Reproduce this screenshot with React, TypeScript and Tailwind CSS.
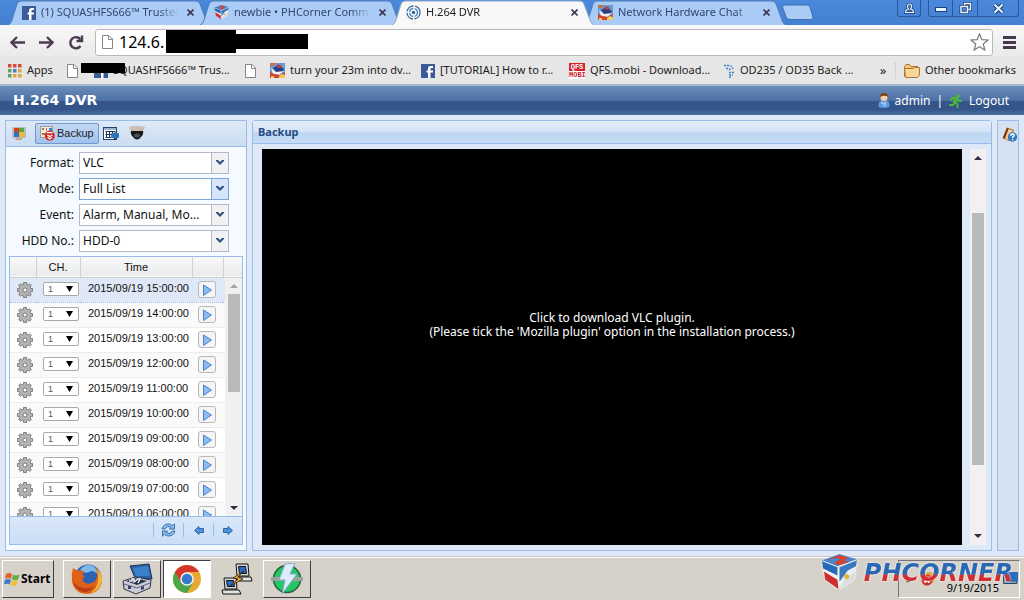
import { useState } from 'react';
import type { ReactNode } from 'react';

const FacebookIcon = () => (
  <svg className="w-[14px] h-[14px] shrink-0" viewBox="0 0 14 14">
    <rect width="14" height="14" fill="#3a5a98" />
    <path d="M12 4H10.500Q9.500 4 9.500 5V6.500H12V8.500H9.500V14H7V8.500H5.500V6.500H7V4.500Q7 2 9.500 2H12Z" fill="#fff" />
  </svg>
);

const CubeIcon = ({ className }: { className: string }) => (
  <svg className={className} viewBox="0 0 36 36">
    <path d="M1 6L18 0L35 5L16 12Z" fill="#4a86c8" />
    <path d="M6 6L18 1L27 4L22 6L27 8L16 11L13 8L20 5L14 4Z" fill="#d8402f" />
    <path d="M1 7L16 13L17 34L4 25Z" fill="#f4f4f4" />
    <path d="M1 7L16 13L16 21L2 14Z" fill="#2868b8" />
    <path d="M3 17L16 25L17 34L4 25Z" fill="#cf2e2e" />
    <path d="M18 13L35 6L32 25L18 34Z" fill="#e9eef2" />
    <path d="M18 13L35 6L34 12L26 16L18 27Z" fill="#3a78c0" />
    <path d="M33 17L32 25L18 34L22 26Z" fill="#d9dee2" />
    <circle cx="25" cy="22" r="2.500" fill="#e8b13a" />
  </svg>
);

const DvrIcon = () => (
  <svg className="w-[15px] h-[15px] shrink-0" viewBox="0 0 15 15" fill="none">
    <circle cx="7.500" cy="7.500" r="6.500" stroke="#3d6590" strokeWidth="1.300" strokeDasharray="9 1.500" />
    <circle cx="7.500" cy="7.500" r="4" stroke="#4a90d0" strokeWidth="1.400" strokeDasharray="5 1.500" />
    <circle cx="7.500" cy="7.500" r="1.700" fill="#2f5f96" />
  </svg>
);

const HardwareIcon = () => (
  <svg className="w-[15px] h-[15px] shrink-0" viewBox="0 0 15 15">
    <rect width="15" height="15" fill="#6a9ad0" />
    <path d="M0 0H6L3 3L0 3Z" fill="#c9713a" />
    <path d="M3 5L8 2L14 6L12 10L7 10Z" fill="#2a3f80" />
    <path d="M1 5L6 9L14 8L9 12L3 11Z" fill="#f3efe8" />
    <path d="M0 9L4 11L10 12L15 9V15H0Z" fill="#d2452c" />
    <path d="M9 13L12 11L15 12V15H9ZM1 13H4V15H1Z" fill="#f4c860" />
    <path d="M8 1L12 3L10 5L6 4Z" fill="#b83c48" />
  </svg>
);

const PageIcon = () => (
  <svg className="w-[11px] h-[14px] shrink-0" viewBox="0 0 11 14">
    <path d="M0.500 0.500H7L10.500 4V13.500H0.500Z" fill="#fff" stroke="#858585" />
    <path d="M6.500 0.500V4.500H10.500" fill="none" stroke="#858585" />
  </svg>
);

const AppsIcon = () => (
  <svg className="w-[14px] h-[14px] shrink-0" viewBox="0 0 14 14">
    <path d="M0 0H3.500V3.500H0ZM5 0H8.500V3.500H5ZM10 0H13.500V3.500H10Z" fill="#d24a42" />
    <path d="M0 5H3.500V8.500H0ZM0 10H3.500V13.500H0Z" fill="#62a45a" />
    <path d="M5 5H8.500V8.500H5Z" fill="#4682c4" />
    <path d="M5 10H8.500V13.500H5ZM10 5H13.500V8.500H10ZM10 10H13.500V13.500H10Z" fill="#dfa540" />
  </svg>
);

const QfsIcon = () => (
  <span className="flex flex-col w-4 h-4 shrink-0 font-['Liberation_Mono'] font-bold text-[7px] leading-[8px] text-center">
    <span className="bg-[#d3242c] text-white">QFS</span>
    <span className="bg-white text-[#d3242c]">MOBI</span>
  </span>
);

const ForumIcon = () => (
  <svg className="w-[11px] h-[14px] shrink-0" viewBox="0 0 11 14" fill="none" stroke="#3e7fc6" strokeWidth="1.400" strokeDasharray="2 1">
    <path d="M0 1.500H4Q8 1.500 9 5M2 4.500Q6 4 7 7M5 8.500H10M5 11H9M5 13H7" />
  </svg>
);

const FolderIcon = () => (
  <svg className="w-[16px] h-[14px] shrink-0" viewBox="0 0 16 14">
    <path d="M0.500 12.500V2.500L2 0.500H5.500L7 2.500H13.500V4" fill="#f3c67c" stroke="#b4702c" />
    <path d="M0.500 4.500H9L10.500 3.500H15.500V11L13.500 13.500H1.500Z" fill="#f8d898" stroke="#b4722f" />
  </svg>
);

const MonitorIcon = () => (
  <svg className="w-[14px] h-[14px]" viewBox="0 0 14 14">
    <rect width="14" height="11" rx="1" fill="#b6bcc0" />
    <path d="M2 1H7V5H2Z" fill="#db3d20" />
    <path d="M7 1H12V5H7Z" fill="#56a83a" />
    <path d="M2 5H7V10H2Z" fill="#2d6fc8" />
    <path d="M7 5H12V10H7Z" fill="#edba2e" />
    <path d="M4 11H10V13H3Z" fill="#c8a884" />
  </svg>
);

const BackupIcon = () => (
  <svg className="w-[15px] h-[15px]" viewBox="0 0 15 15">
    <rect x="0.500" y="0.500" width="12" height="11" fill="#f2ece4" stroke="#9e9a94" />
    <path d="M2 2H4V4H2ZM2 7H5V9H2ZM6 2H7V5H6Z" fill="#a97245" />
    <path d="M9 2H12V5H9Z" fill="#3f83c9" />
    <circle cx="9.800" cy="9.800" r="5" fill="#cf2724" />
    <path d="M7 6.700H12.600M7.300 9L9.800 10.500L12.300 9M7.500 11.300L9.800 13L12.100 11.300" stroke="#fff" strokeWidth="1.200" fill="none" />
  </svg>
);

const RecordIcon = () => (
  <svg className="w-4 h-[15px]" viewBox="0 0 16 15">
    <rect x="0.500" y="1.500" width="13" height="12" fill="#fff" stroke="#22466e" />
    <path d="M1 2H13V4H1Z" fill="#9db6cf" />
    <path d="M2.500 5.500H12M2.500 8.500H8M2.500 11.500H8M3.500 5V12M6.500 5V12M9.500 5V8M12 5V7" stroke="#1c3050" fill="none" />
    <rect x="8" y="7" width="8" height="5" rx="1" fill="#2f72c0" />
    <path d="M11 12H13L14 14H10Z" fill="#243f66" />
  </svg>
);

const DomeIcon = () => (
  <svg className="w-4 h-[15px]" viewBox="0 0 16 15">
    <path d="M0 1Q8 -1 16 1L14 6H2Z" fill="#c9beb0" />
    <path d="M2 5H14Q15 8 12 11Q8 16 4 11Q1 8 2 5Z" fill="#16181c" />
    <ellipse cx="8" cy="9.500" rx="3" ry="2" fill="#4a5058" />
  </svg>
);

const GearIcon = () => (
  <svg className="w-4 h-4" viewBox="0 0 16 16">
    <path d="M6.500 0.500H9.500V2.500L11 3.100L12.500 1.700L14.400 3.600L13 5L13.600 6.500H15.500V9.500H13.600L13 11L14.400 12.400L12.500 14.300L11 12.900L9.500 13.500V15.500H6.500V13.500L5 12.900L3.500 14.300L1.600 12.400L3 11L2.400 9.500H0.500V6.500H2.400L3 5L1.600 3.600L3.500 1.700L5 3.100L6.500 2.500Z" fill="#b3b3b3" stroke="#777" strokeWidth="0.900" />
    <circle cx="8" cy="8" r="2" fill="#fff" stroke="#777" />
  </svg>
);

const UserIcon = () => (
  <svg className="w-3 h-[15px]" viewBox="0 0 12 15">
    <path d="M0.500 12Q0.500 7 6 7Q11.500 7 11.500 12V14Q6 16 0.500 14Z" fill="#5b9ae0" />
    <path d="M4 11V9M8 10Q5.500 9.500 5.500 11.500Q6 13 8 12" stroke="#e6f2ff" fill="none" />
    <circle cx="6" cy="4.500" r="3.500" fill="#f2cfa8" />
    <path d="M2 4Q2 0 6 0Q10.500 0 10 4Q8 2 4.500 3Z" fill="#7e4218" />
  </svg>
);

const RunnerIcon = () => (
  <svg className="w-[13px] h-[14px]" viewBox="0 0 13 14" fill="none" stroke="#4cb83c" strokeLinecap="square">
    <circle cx="9" cy="2" r="1.300" fill="#4cb83c" strokeWidth="1" />
    <path d="M7.500 4.500L5.500 8" strokeWidth="3" />
    <path d="M7 4H3L2 6M8 5L9.500 7H12M6 8L8.500 10V13M5.500 9L4 11H1" strokeWidth="1.800" />
  </svg>
);

const HelpBookIcon = () => (
  <svg className="w-4 h-[15px]" viewBox="0 0 16 15">
    <path d="M5 0.500L12 3L7 14L0.500 11Z" fill="#9d5a2b" />
    <path d="M6.500 2L11 3.500L6 13L3 11.500Z" fill="#f5cf95" />
    <path d="M5 1L6.500 1.500L2.500 12L1 11Z" fill="#7b3413" />
    <circle cx="10.500" cy="10" r="4.700" fill="#3478c6" />
    <path d="M8.800 9Q8.800 7 10.600 7Q12.400 7.200 12.200 8.700Q12 9.500 10.600 10.200V11M10.600 12V13.200" stroke="#fff" strokeWidth="1.300" fill="none" />
  </svg>
);

const SyncIcon = () => (
  <svg className="w-[15px] h-[14px]" viewBox="0 0 15 14">
    <path d="M1 6Q2.500 1 7.500 1Q10 1 11.500 2.800L13.500 0.800V6H8.500L10 4.400Q6 2 3.800 6Z" fill="#8dbcf0" stroke="#2d62a4" strokeWidth="0.900" />
    <path d="M14 8Q12.500 13 7.500 13Q5 13 3.500 11.200L1.500 13.200V8H6.500L5 9.600Q9 12 11.200 8Z" fill="#8dbcf0" stroke="#2d62a4" strokeWidth="0.900" />
  </svg>
);

const PageArrow = ({ d }: { d: string }) => (
  <svg className="w-[10px] h-[9px]" viewBox="0 0 10 9">
    <path d={d} fill="#4c92dc" stroke="#2a5c9e" strokeWidth="0.900" />
  </svg>
);

const StartIcon = () => (
  <svg className="w-4 h-[15px] shrink-0" viewBox="0 0 16 15">
    <path d="M2 2Q5 0 8 2L7 7Q4 5 1 7Z" fill="#e5622c" />
    <path d="M9 2.500Q12 4.500 15.500 2.500L14 7.500Q11 9 8 7.500Z" fill="#63ac3d" />
    <path d="M1 8Q4 6 7 8L5.500 12.500Q3 11 0 12.500Z" fill="#3b78cc" />
    <path d="M7.700 8.500Q10.500 10 13.700 8.500L12.500 13Q9.500 15 6.500 13Z" fill="#f1bd38" />
  </svg>
);

const FirefoxIcon = () => (
  <svg className="w-8 h-8" viewBox="0 0 32 32">
    <circle cx="17" cy="15" r="13.500" fill="#2e62b4" />
    <path d="M9 7Q14 0 22 3Q28 7 27 12Q22 6 18 9Q14 11 11 8Z" fill="#7fb8ea" />
    <path d="M2 5L7 8Q10 6 13 9L11 12L14 13Q11 15 12 18Q16 23 23 19Q27 16 26 9L24 5Q32 10 31 18Q29 30 17 31Q3 31 1 18Q0 11 2 5Z" fill="#df6118" />
    <path d="M25 5Q32 11 31 18Q28 28 20 30Q27 24 27 16Q28 10 25 5Z" fill="#f3b437" />
    <path d="M1 17Q5 24 13 25Q19 26 23 23Q20 29 13 29Q5 28 1 17Z" fill="#b63e11" />
  </svg>
);

const ToolboxIcon = () => (
  <svg className="w-8 h-8" viewBox="0 0 32 32">
    <path d="M9 3L28 1L31 16L14 15Z" fill="#2a62a8" stroke="#23304c" />
    <path d="M12 5L27 3L29 13L15 13Z" fill="#3c80cc" />
    <path d="M2 18L14 14L30 17L29 25L15 31L3 26Z" fill="#c9ccd6" stroke="#33364a" />
    <path d="M5 18L14 15L26 18L16 22Z" fill="#26344e" />
    <path d="M8 18H11V16H13V19L17 16H19L17 20" stroke="#e6e9f0" strokeWidth="1.500" fill="none" />
    <path d="M3 21L16 25L29 20" stroke="#60637a" fill="none" />
    <path d="M7 23H10V26H7ZM20 24L23 23V26L20 27Z" fill="#4a3868" />
  </svg>
);

const ChromeIcon = () => (
  <svg className="w-[30px] h-[30px]" viewBox="0 0 30 30">
    <circle cx="15" cy="15" r="14" fill="#e8a934" />
    <path d="M2.900 8A14 14 0 0 1 27.100 8H15L9 18.500Z" fill="#d8352c" />
    <path d="M2.900 8A14 14 0 0 0 15 29L21 18.500H9Z" fill="#4aa648" />
    <circle cx="15" cy="15" r="6.800" fill="#f5f5f5" />
    <circle cx="15" cy="15" r="5.300" fill="#3679c8" />
  </svg>
);

const PuttyIcon = () => (
  <svg className="w-8 h-8" viewBox="0 0 32 32" stroke="#111">
    <path d="M15 1H27L28 13H16Z" fill="#d9d9d6" />
    <path d="M17.500 3.500H24.500L25.500 10.500H18.500Z" fill="#2e6ac0" />
    <path d="M14 14H30L31 18H17Z" fill="#e4e4e0" />
    <path d="M3 15H15L16 26H4Z" fill="#d9d9d6" />
    <path d="M5.500 17.500H12.500L13.500 23.500H6.500Z" fill="#2e6ac0" />
    <path d="M1 27H18L20 31H2Z" fill="#e4e4e0" />
    <path d="M23 8L12 15L17 16L9 23L22 16L17 14Z" fill="#f2a72c" strokeWidth="0.700" />
  </svg>
);

const BoltIcon = () => (
  <svg className="w-8 h-8" viewBox="0 0 32 32">
    <circle cx="16" cy="16" r="13.500" fill="#22c864" stroke="#285b3c" strokeWidth="1.500" />
    <path d="M0 14H32V18H0Z" fill="#9aa49e" />
    <path d="M14 1L24 0L19 11H26L11 31L14 17H8Z" fill="#dcebfa" stroke="#86a8cc" />
  </svg>
);

const TABS = [
  { title: '(1) SQUASHFS666™ Trusted Seller', icon: <FacebookIcon /> },
  { title: 'newbie • PHCorner Community', icon: <CubeIcon className="w-[15px] h-[15px] shrink-0" /> },
  { title: 'H.264 DVR', icon: <DvrIcon />, active: true },
  { title: 'Network Hardware Chat', icon: <HardwareIcon /> },
];

const BOOKMARKS = [
  { label: 'Apps', icon: <AppsIcon />, width: 'w-[59px]' },
  { label: '', icon: <PageIcon />, width: 'w-[27px]' },
  { label: 'SQUASHFS666™ Trus...', icon: <FacebookIcon />, width: 'w-[151px]' },
  { label: '', icon: <PageIcon />, width: 'w-[25px]' },
  { label: 'turn your 23m into dv...', icon: <HardwareIcon />, width: 'w-[151px]' },
  { label: '[TUTORIAL] How to r...', icon: <FacebookIcon />, width: 'w-[148px]' },
  { label: 'QFS.mobi - Download...', icon: <QfsIcon />, width: 'w-[155px]' },
  { label: 'OD235 / OD35 Back ...', icon: <ForumIcon />, width: 'w-[140px]' },
];

const FIELDS = [
  { id: 'format', label: 'Format:', value: 'VLC' },
  { id: 'mode', label: 'Mode:', value: 'Full List', focused: true },
  { id: 'event', label: 'Event:', value: 'Alarm, Manual, Mo...' },
  { id: 'hdd', label: 'HDD No.:', value: 'HDD-0' },
];

const HOURS = ['15', '14', '13', '12', '11', '10', '09', '08', '07', '06'];

const BrowserTab = ({ title, icon, active }: { title: string; icon: ReactNode; active?: boolean }) => (
  <div className={`relative flex items-center w-[202px] h-[25px] pl-[14px] pr-[14px] not-first:-ml-[10px] ${active ? 'z-10' : ''}`}>
    <svg className="absolute inset-0 w-full h-full" viewBox="0 0 202 25" preserveAspectRatio="none">
      <path
        d="M0 25Q3 24 4 20L9 4Q10 1 13 1H188Q191 1 192 4L198 20Q199 24 202 25"
        fill={active ? '#f8f8f8' : '#a9cbf5'}
        stroke={active ? '#8ba7cd' : '#4f7db8'}
      />
    </svg>
    <div className="relative flex items-center flex-1 min-w-0 gap-[5px]">
      {icon}
      <span className={`flex-1 overflow-hidden whitespace-nowrap mask-r-from-85% ${active ? 'text-[#222]' : 'text-[#37476b]'}`}>
        {title}
      </span>
      <button aria-label="Close tab" className="flex items-center justify-center w-3 h-3">
        <svg className="w-[7px] h-[7px]" viewBox="0 0 7 7" stroke="#3f3650" strokeWidth="1.600">
          <path d="M0.500 0.500L6.500 6.500M6.500 0.500L0.500 6.500" />
        </svg>
      </button>
    </div>
  </div>
);

const TabStrip = () => (
  <div className="flex h-[25px] pl-2 pr-[5px] bg-linear-to-b from-[#4a88dc] to-[#4380d0] text-[11px]">
    {TABS.map((tab) => (
      <BrowserTab key={tab.title} {...tab} />
    ))}
    <button aria-label="New tab" className="mt-1 -ml-1 h-[17px]">
      <svg className="w-[32px] h-[17px]" viewBox="0 0 32 17">
        <path d="M0.500 3Q0.500 1 3 1H25Q27 1 28 3L31 13Q31 15.500 29 15.500H8Q5 15.500 4 13Z" fill="#a9cbf5" stroke="#3f6fae" />
      </svg>
    </button>
    <div className="flex items-start gap-[7px] ml-auto text-[#e9f3ff]">
      <button aria-label="Profile" className="flex items-center justify-center w-6 h-[17px] border border-t-0 border-[#2b579c] rounded-b-[3px]">
        <svg className="w-[11px] h-[11px]" viewBox="0 0 11 11" fill="none">
          <path d="M3.500 3.500Q3.500 1 5.500 1Q7.500 1 7.500 3.500Q7.500 5 6.500 6Q9.500 6.500 9.500 9.500H1.500Q1.500 6.500 4.500 6Q3.500 5 3.500 3.500Z" stroke="#1f3f78" strokeWidth="2.600" />
          <path d="M3.500 3.500Q3.500 1 5.500 1Q7.500 1 7.500 3.500Q7.500 5 6.500 6Q9.500 6.500 9.500 9.500H1.500Q1.500 6.500 4.500 6Q3.500 5 3.500 3.500Z" stroke="#e9f3ff" strokeWidth="1.200" />
        </svg>
      </button>
      <div className="flex h-[17px] border border-t-0 border-[#2b579c] rounded-b-[3px] divide-x divide-[#2b579c]">
        <button aria-label="Minimize" className="flex items-end justify-center w-6 pb-1">
          <svg className="w-[12px] h-[5px]" viewBox="0 0 12 5">
            <rect x="0.500" y="0.500" width="11" height="4" fill="#e9f3ff" stroke="#1f3f78" />
          </svg>
        </button>
        <button aria-label="Restore" className="flex items-center justify-center w-[25px]">
          <svg className="w-[13px] h-[12px]" viewBox="0 0 13 12" fill="none">
            <path d="M5.500 3V1.500H11.500V7.500H9.500M2 4.500H8.500V10.500H2Z" stroke="#1f3f78" strokeWidth="3" />
            <path d="M5.500 3V1.500H11.500V7.500H9.500M2 4.500H8.500V10.500H2Z" stroke="#e9f3ff" strokeWidth="1.500" />
          </svg>
        </button>
        <button aria-label="Close" className="flex items-center justify-center w-[40px]">
          <svg className="w-[11px] h-[11px]" viewBox="0 0 11 11">
            <path d="M1.500 1.500L9.500 9.500M9.500 1.500L1.500 9.500" stroke="#1f3f78" strokeWidth="4" />
            <path d="M1.500 1.500L9.500 9.500M9.500 1.500L1.500 9.500" stroke="#e9f3ff" strokeWidth="2" />
          </svg>
        </button>
      </div>
    </div>
  </div>
);

const AddressBar = () => (
  <div className="flex items-center h-8 pl-[10px] pr-2 pt-[2px] bg-linear-to-b from-[#f8f8f8] to-[#eaeaea]">
    <div className="flex gap-[14px] mr-[11px]">
      <button aria-label="Back">
        <svg className="w-[15px] h-[13px]" viewBox="0 0 15 13" fill="none" stroke="#4b3a52" strokeWidth="2.300">
          <path d="M15 6.500H2M7 1L1.500 6.500L7 12" />
        </svg>
      </button>
      <button aria-label="Forward">
        <svg className="w-[15px] h-[13px]" viewBox="0 0 15 13" fill="none" stroke="#4b3a52" strokeWidth="2.300">
          <path d="M0 6.500H13M8 1L13.500 6.500L8 12" />
        </svg>
      </button>
      <button aria-label="Reload">
        <svg className="w-[16px] h-[15px]" viewBox="0 0 16 15" fill="none" stroke="#4b3a52" strokeWidth="2.400">
          <path d="M12.500 4.500A5.600 5.600 0 1 0 12.500 11" />
          <path d="M14 0.500V6H8.500" />
        </svg>
      </button>
    </div>
    <div className="relative flex items-center flex-1 h-[27px] pl-[6px] pr-[3px] bg-white border border-[#b9b9b9] rounded-[3px]">
      <PageIcon />
      <input
        aria-label="Address"
        defaultValue="124.6."
        className="flex-1 min-w-0 ml-[6px] text-[16px] text-black outline-none"
      />
      <button aria-label="Bookmark this page">
        <svg className="w-[19px] h-[18px]" viewBox="0 0 19 18">
          <path d="M9.500 1L11.800 6.600L18 7L13.300 11L14.800 17L9.500 13.700L4.200 17L5.700 11L1 7L7.200 6.600Z" fill="#fff" stroke="#7c7c7c" strokeWidth="1.200" />
        </svg>
      </button>
      <span className="absolute top-0 left-[70px] w-[70px] h-[23px] bg-black" />
      <span className="absolute top-[4px] left-[138px] w-[74px] h-[15px] bg-black" />
    </div>
    <button aria-label="Menu" className="ml-[10px]">
      <svg className="w-[13px] h-[14px]" viewBox="0 0 13 14" fill="#463850">
        <path d="M0 1H13V4H0ZM0 6H13V9H0ZM0 11H13V14H0Z" />
      </svg>
    </button>
  </div>
);

const BookmarksBar = () => (
  <div className="relative flex items-center h-[29px] pl-2 pr-2 bg-[#e6e6e6] border-b-2 border-[#a9b7cb] text-[11px] text-[#222]">
    {BOOKMARKS.map((item, i) => (
      <a key={i} href="#" className={`flex items-center gap-[5px] whitespace-nowrap ${item.width}`}>
        {item.icon}
        {item.label}
      </a>
    ))}
    <div className="flex items-center ml-auto">
      <button aria-label="More bookmarks" className="w-3 text-center text-[13px]">»</button>
      <a href="#" className="flex items-center gap-[5px] pl-2 ml-[6px] border-l border-[#d2d2d2] whitespace-nowrap">
        <FolderIcon />
        Other bookmarks
      </a>
    </div>
    <span className="absolute top-[6px] left-[81px] w-[44px] h-[10px] bg-black" />
  </div>
);

const AppHeader = () => (
  <header className="flex items-center justify-between h-[29px] pl-[13px] pr-[15px] bg-[linear-gradient(#6b8dba_0%,#4c70a5_50%,#365589_52%,#34558a_80%,#4a6da3_100%)] text-white">
    <h1 className="font-['DejaVu_Sans'] text-[14px] font-bold">H.264 DVR</h1>
    <div className="flex items-center text-[12px] leading-4">
      <UserIcon />
      <span className="ml-[5px] mr-[6px]">admin</span>
      <span className="mr-[6px]">|</span>
      <RunnerIcon />
      <a href="#" className="ml-[7px]">Logout</a>
    </div>
  </header>
);

const ComboField = ({ id, label, value, focused }: { id: string; label: string; value: string; focused?: boolean }) => (
  <div className="flex items-center">
    <label htmlFor={id} className="w-[65px] pr-[5px] text-right whitespace-nowrap">
      {label}
    </label>
    <div className="relative w-[150px] h-[22px]">
      <select
        id={id}
        className={`w-full h-full pl-[3px] pr-5 appearance-none bg-white border outline-none ${focused ? 'border-[#7fa5d8]' : 'border-[#b5b8c8]'}`}
      >
        <option>{value}</option>
      </select>
      <span
        className={`absolute right-0 inset-y-0 flex items-center justify-center w-[18px] pb-[2px] border pointer-events-none ${focused ? 'border-[#7fa5d8] bg-[#d6e5fa]' : 'border-[#b5b8c8] bg-[#f1f1f1]'}`}
      >
        <svg className="w-[8px] h-[5px]" viewBox="0 0 8 5">
          <path d="M0 0H2L4 2L6 0H8V1L4 5L0 1Z" fill="#2f5080" />
        </svg>
      </span>
    </div>
  </div>
);

const Triangle = ({ up, color }: { up?: boolean; color: string }) => (
  <svg className="w-[8px] h-[4px]" viewBox="0 0 8 4">
    <path d={up ? 'M0 4L4 0L8 4Z' : 'M0 0H8L4 4Z'} fill={color} />
  </svg>
);

const RecordTable = () => {
  const [selected, setSelected] = useState(0);

  return (
    <div className="relative flex-1 min-h-0 overflow-hidden bg-white">
      <table className="w-full table-fixed border-collapse font-['Liberation_Sans'] text-[11px] text-[#111]">
        <colgroup>
          <col className="w-[26px]" />
          <col className="w-[44px]" />
          <col className="w-[112px]" />
          <col className="w-[31px]" />
          <col />
        </colgroup>
        <thead>
          <tr className="h-5 bg-linear-to-b from-[#f9f9f9] to-[#e9ebed] border-b border-[#d0d0d0] [&>th]:font-normal [&>th]:not-last:border-r [&>th]:border-[#d0d0d0]">
            <th />
            <th>CH.</th>
            <th>Time</th>
            <th />
            <th />
          </tr>
        </thead>
        <tbody>
          {HOURS.map((hour, i) => (
            <tr
              key={hour}
              onClick={() => setSelected(i)}
              className={`h-[25px] border-b ${i === selected ? 'bg-[#dfe8f6] border-dotted border-[#a3bae9]' : 'border-[#ededed] odd:bg-white even:bg-[#fafafa]'}`}
            >
              <td className="pl-[7px]">
                <GearIcon />
              </td>
              <td className="pl-[7px] pb-[2px]">
                <div className="relative w-[36px] h-[14px]">
                  <select
                    aria-label={`Channel ${hour}:00`}
                    className="block w-full h-full pl-1 appearance-none bg-white border border-[#a9a9a9] rounded-[2px] text-[9px] leading-3 text-[#555]"
                  >
                    <option>1</option>
                  </select>
                  <svg className="absolute right-[6px] top-1 w-[7px] h-[6px] pointer-events-none" viewBox="0 0 7 6">
                    <path d="M0 0H7L3.500 6Z" fill="#000" />
                  </svg>
                </div>
              </td>
              <td className="pb-[3px] pl-2 whitespace-nowrap">2015/09/19 {hour}:00:00</td>
              <td className="pl-[6px]">
                <button aria-label={`Play ${hour}:00`} className="flex items-center justify-center w-[18px] h-[17px] bg-[#f5f5f5] border border-[#b8b8b8] rounded-[3px]">
                  <svg className="w-[9px] h-[12px]" viewBox="0 0 9 12">
                    <path d="M0.500 1L8.500 6L0.500 11.500Z" fill="#8dbaf0" stroke="#4c84cc" />
                  </svg>
                </button>
              </td>
              <td />
            </tr>
          ))}
        </tbody>
      </table>
      <div className="absolute top-[21px] bottom-0 right-0 flex flex-col items-center w-[17px] py-[6px] bg-[#f1f0f1]">
        <Triangle up color="#a3a3a3" />
        <span className="w-[12px] h-[98px] mt-[6px] bg-[#b9bbbb]" />
        <span className="mt-auto">
          <Triangle color="#332c44" />
        </span>
      </div>
    </div>
  );
};

const BackupSidebar = () => (
  <aside className="flex flex-col w-[242px] shrink-0 border border-[#99bce8] bg-[#f4faff]">
    <div className="flex items-center h-[26px] pl-[6px] bg-linear-to-b from-[#dde9f6] to-[#cbddf2] border-b border-[#99bce8] text-[11px]">
      <button aria-label="Live view">
        <MonitorIcon />
      </button>
      <button className="flex items-center gap-[2px] h-[21px] px-1 ml-[9px] bg-linear-to-b from-[#c3d8f4] to-[#a1c3ef] border border-[#7397c6] rounded-[2px] font-['Liberation_Sans'] text-[#222]">
        <BackupIcon />
        Backup
      </button>
      <button aria-label="Schedule" className="ml-1">
        <RecordIcon />
      </button>
      <button aria-label="Camera" className="ml-[10px]">
        <DomeIcon />
      </button>
    </div>
    <div className="flex flex-col flex-1 min-h-0 px-[3px] pt-[5px] pb-[5px]">
      <form className="flex flex-col gap-1 mb-1 pl-[5px] text-[12px] text-[#111]">
        {FIELDS.map((field) => (
          <ComboField key={field.id} {...field} />
        ))}
      </form>
      <div className="flex flex-col flex-1 min-h-0 border border-[#99bce8]">
        <RecordTable />
        <div className="flex items-center justify-end h-7 pb-px pr-[9px] bg-linear-to-b from-[#d9e7f8] to-[#cadef5] border-t border-[#99bce8] [&>button]:h-[14px]">
          <button aria-label="Refresh" className="pl-[7px] pr-[7px] border-l border-[#98c0f0]">
            <SyncIcon />
          </button>
          <button aria-label="Previous page" className="pl-[10px] pr-[9px] border-l border-[#98c0f0]">
            <PageArrow d="M0.500 4.500L5 0.500V2.500H9.500V6.500H5V8.500Z" />
          </button>
          <button aria-label="Next page" className="pl-[9px] border-l border-[#98c0f0]">
            <PageArrow d="M9.500 4.500L5 0.500V2.500H0.500V6.500H5V8.500Z" />
          </button>
        </div>
      </div>
    </div>
  </aside>
);

const Viewer = () => (
  <section className="flex flex-col flex-1 min-w-0 border border-[#99bce8] rounded-t-[3px] bg-[#dfe8f6]">
    <h2 className="h-[23px] pl-[5px] bg-[linear-gradient(#e3edf8_0%,#d4e3f5_48%,#bfd7f2_52%,#c6dbf4_100%)] border-b border-[#99bce8] text-[11px] leading-[22px] font-bold text-[#274b82]">
      Backup
    </h2>
    <div className="flex flex-1 min-h-0 gap-2 pt-[5px] pb-[5px] pl-[9px] pr-[5px]">
      <div className="flex flex-1 items-center justify-center bg-black">
        <a href="#" className="pb-11 text-center text-[12px] leading-[14px] text-white">
          Click to download VLC plugin.
          <br />
          (Please tick the 'Mozilla plugin' option in the installation process.)
        </a>
      </div>
      <div className="flex flex-col items-center w-4 py-[7px] bg-[#f1f1f3]">
        <Triangle up color="#332c44" />
        <span className="w-[12px] h-[252px] mt-[53px] bg-[#b9bbbb]" />
        <span className="mt-auto">
          <Triangle color="#332c44" />
        </span>
      </div>
    </div>
  </section>
);

const TASKS = [
  { name: 'Firefox', icon: <FirefoxIcon />, style: 'raised' },
  { name: 'Toolbox', icon: <ToolboxIcon />, style: 'raised' },
  { name: 'Chrome', icon: <ChromeIcon />, style: 'pressed' },
  { name: 'PuTTY', icon: <PuttyIcon />, style: 'flat' },
  { name: 'Utility', icon: <BoltIcon />, style: 'raised' },
];

const TASK_STYLES: Record<string, string> = {
  raised: 'border bg-[#d6d2ca] border-t-white border-l-white border-r-[#403c4c] border-b-[#403c4c]',
  pressed: 'border bg-white border-t-[#403c4c] border-l-[#403c4c] border-r-white border-b-white',
  flat: '',
};

const Taskbar = () => (
  <footer className="relative flex h-11 pt-[3px] pb-[2px] pl-[2px] pr-1 bg-[#d6d2ca] border-t border-[#c6c4c4] shadow-[inset_0_1px_0_#fff]">
    <button className="flex items-center gap-px w-[52px] h-[38px] pl-px border border-t-white border-l-white border-r-[#403c4c] border-b-[#403c4c] text-[12px] font-bold text-black">
      <StartIcon />
      Start
    </button>
    <div className="flex gap-[2px] ml-[9px]">
      {TASKS.map((task) => (
        <button
          key={task.name}
          aria-label={task.name}
          className={`flex items-center justify-center w-12 h-[38px] ${TASK_STYLES[task.style]}`}
        >
          {task.icon}
        </button>
      ))}
    </div>
    <div className="flex items-end justify-end w-[122px] h-[38px] ml-auto pb-px border border-t-[#77747c] border-l-[#77747c] border-r-white border-b-white text-[11px] leading-4 text-black">
      <span className="self-center mr-[10px] text-[10px]">»</span>
      <svg className="self-center w-[14px] h-[14px] mr-3" viewBox="0 0 14 14">
        <circle cx="8" cy="6" r="6" fill="#e0a33a" />
        <circle cx="6" cy="8" r="5.500" fill="#cf2c27" />
        <path d="M3.500 5.500L8.500 10.500M8.500 5.500L3.500 10.500" stroke="#fff" strokeWidth="2" />
      </svg>
      <span>9/19/2015</span>
      <svg className="w-[16px] h-[13px] mb-3 ml-1 mr-0" viewBox="0 0 16 13">
        <path d="M0.500 0.500H4V10H14V12.500H0.500Z" fill="#90a4b8" stroke="#23466e" />
        <path d="M4 1H15V10H4Z" fill="#2e6cbc" />
      </svg>
    </div>
    <div className="absolute right-[10px] bottom-[9px] flex items-center gap-[6px] pointer-events-none drop-shadow-[0_0_1px_white]">
      <CubeIcon className="w-[37px] h-[37px]" />
      <span className="pr-px bg-linear-to-b from-[#2a68b4] from-55% to-[#d22d30] to-56% bg-clip-text font-['DejaVu_Sans'] text-[24px] leading-7 font-bold italic text-transparent">
        PHCORNER
      </span>
    </div>
  </footer>
);

const App = () => {
  return (
    <div className="flex flex-col h-screen overflow-hidden bg-[#dfe8f6] font-['Noto_Sans',sans-serif]">
      <TabStrip />
      <AddressBar />
      <BookmarksBar />
      <AppHeader />
      <main className="flex flex-1 min-h-0 gap-[5px] p-[5px]">
        <BackupSidebar />
        <Viewer />
        <aside className="w-[22px] pt-[3px] pl-1 bg-[#d3e1f1] border border-[#99bce8]">
          <button aria-label="Help">
            <HelpBookIcon />
          </button>
        </aside>
      </main>
      <Taskbar />
    </div>
  );
};

export default App;
